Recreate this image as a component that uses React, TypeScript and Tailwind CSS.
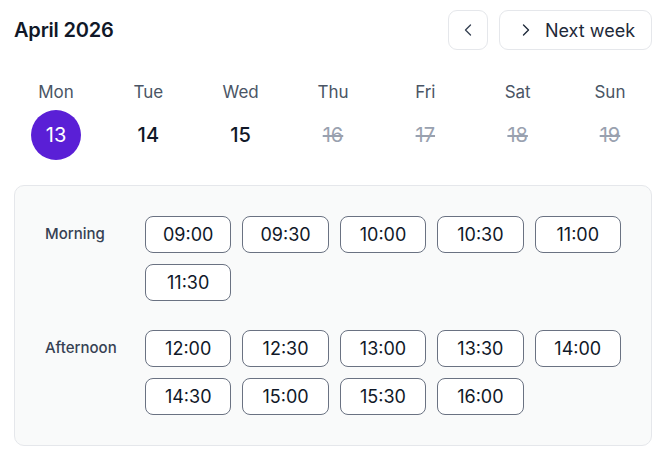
import { ChevronLeft, ChevronRight } from 'lucide-react';

const days = [
  { name: 'Mon', date: 13, selected: true, disabled: false },
  { name: 'Tue', date: 14, selected: false, disabled: false },
  { name: 'Wed', date: 15, selected: false, disabled: false },
  { name: 'Thu', date: 16, selected: false, disabled: true },
  { name: 'Fri', date: 17, selected: false, disabled: true },
  { name: 'Sat', date: 18, selected: false, disabled: true },
  { name: 'Sun', date: 19, selected: false, disabled: true },
];

const groups = [
  { label: 'Morning', slots: ['09:00', '09:30', '10:00', '10:30', '11:00', '11:30'] },
  { label: 'Afternoon', slots: ['12:00', '12:30', '13:00', '13:30', '14:00', '14:30', '15:00', '15:30', '16:00'] },
];

export default function App() {
  return (
    <div className="w-[670px] h-[456px] bg-white pl-[14px] pr-[18px] pt-[10px] font-['Inter',sans-serif] text-gray-900">
      <div className="flex items-center justify-between">
        <h1 className="text-[20px] font-semibold tracking-[-0.2px]">April 2026</h1>
        <div className="flex gap-[11px]">
          <button className="w-[40px] h-[40px] flex items-center justify-center border border-gray-200 rounded-[9px] text-gray-700">
            <ChevronLeft className="w-5 h-5" strokeWidth={1.6} />
          </button>
          <button className="w-[153px] h-[40px] flex items-center justify-center gap-[9px] border border-gray-200 rounded-[9px] text-[18px] font-normal text-gray-800">
            <ChevronRight className="w-5 h-5" strokeWidth={1.6} />
            Next week
          </button>
        </div>
      </div>

      <div className="flex justify-between mt-[32px]">
        {days.map((d) => (
          <div key={d.name} className="w-[84px] flex flex-col items-center">
            <span className="text-[17px] text-gray-600 leading-[20px]">{d.name}</span>
            <div
              className={
                d.selected
                  ? 'mt-[8px] w-[50px] h-[50px] rounded-full bg-[#5a1fd6] text-white flex items-center justify-center text-[20px]'
                  : d.disabled
                  ? 'mt-[8px] w-[50px] h-[50px] flex items-center justify-center text-[20px] text-gray-400 line-through'
                  : 'mt-[8px] w-[50px] h-[50px] flex items-center justify-center text-[20px] font-medium text-gray-900'
              }
            >
              {d.date}
            </div>
          </div>
        ))}
      </div>

      <div className="mt-[25px] border border-gray-200 rounded-[10px] bg-[#f9fafa] px-[30px] pt-[30px] pb-[30px] flex flex-col gap-[29px]">
        {groups.map((g) => (
          <div key={g.label} className="flex">
            <div className="w-[100px] pt-[7px] text-[15px] font-medium text-gray-700">{g.label}</div>
            <div className="flex-1 grid grid-cols-5 gap-[11px]">
              {g.slots.map((s) => (
                <button
                  key={s}
                  className="h-[37px] bg-white border border-gray-500 rounded-[8px] text-[18px] text-gray-900 flex items-center justify-center"
                >
                  {s}
                </button>
              ))}
            </div>
          </div>
        ))}
      </div>
    </div>
  );
}
